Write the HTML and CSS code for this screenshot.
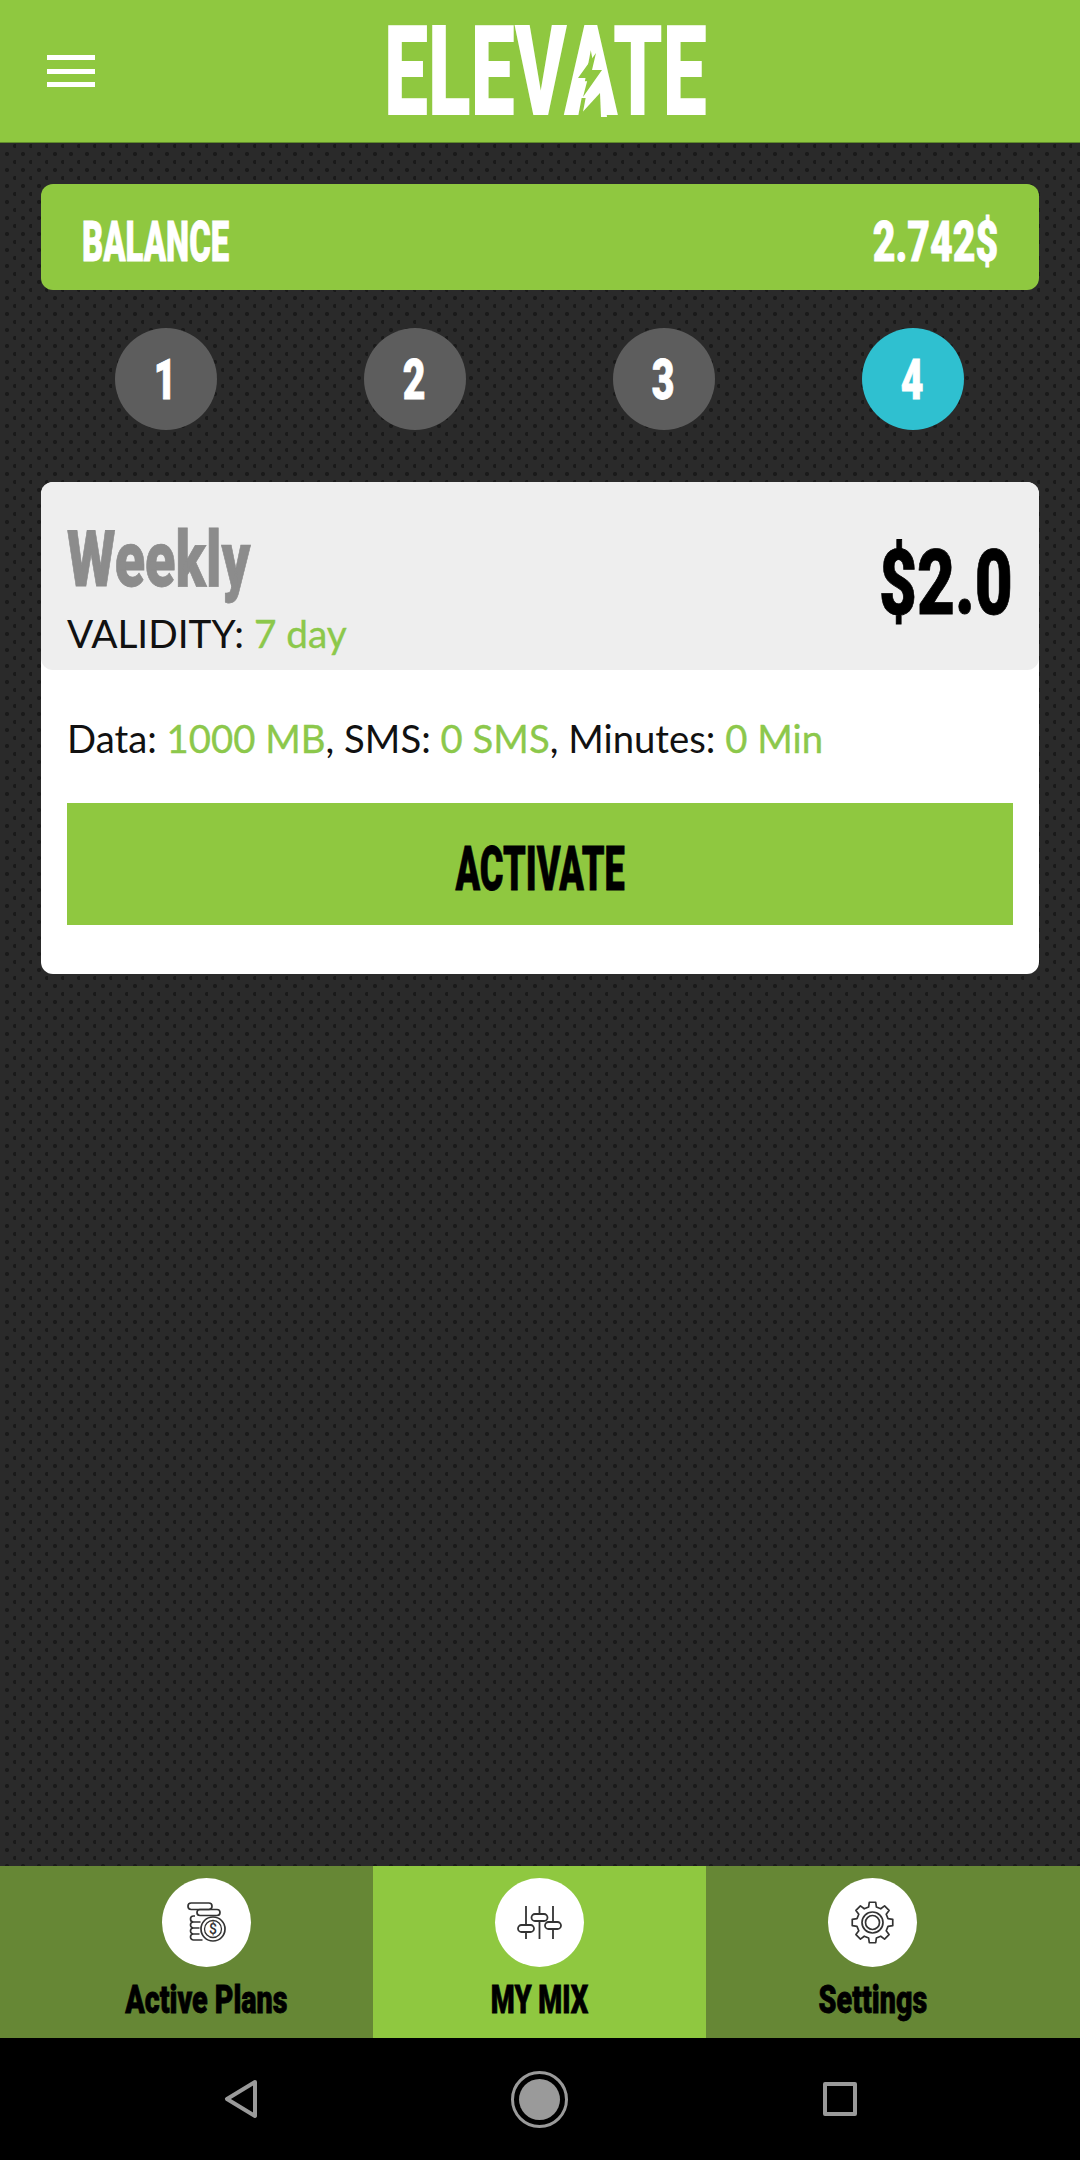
FILE: index.html
```html
<!DOCTYPE html>
<html lang="en">
<head>
<meta charset="utf-8">
<title>Elevate</title>
<link rel="stylesheet" href="styles.css">
</head>
<body>
<div class="page">
  <header class="topbar">
    <div class="burger"><i></i><i></i><i></i></div>
    <div class="logo">
      <span class="logo-text">ELEVATE</span>
      <svg class="logo-bolt" viewBox="0 0 60 70" width="60" height="70">
        <polygon points="30,-4 17,64 42,64 34,-4" fill="#fff"/>
        <polygon points="31,0 13,25 23,25 18,44 37,17 27,17" fill="#8fc840"/>
        <polygon points="13,64 35,40 36,64" fill="#8fc840"/>
      </svg>
    </div>
  </header>
  <main class="content">
    <section class="balance">
      <span class="cond balance-label">BALANCE</span>
      <span class="cond balance-value">2.742$</span>
    </section>
    <section class="steps">
      <div class="step"><span class="cond step-num">1</span></div>
      <div class="step"><span class="cond step-num">2</span></div>
      <div class="step"><span class="cond step-num">3</span></div>
      <div class="step step-active"><span class="cond step-num">4</span></div>
    </section>
    <section class="card">
      <div class="card-head">
        <div class="card-title">
          <span class="cond weekly">Weekly</span>
          <div class="validity">VALIDITY: <em>7 day</em></div>
        </div>
        <span class="cond price">$2.0</span>
      </div>
      <div class="card-body">
        <p class="allow">Data: <em>1000 MB</em>, SMS: <em>0 SMS</em>, Minutes: <em>0 Min</em></p>
        <div class="activate"><span class="cond activate-text">ACTIVATE</span></div>
      </div>
    </section>
  </main>
  <nav class="tabs">
    <div class="tab">
      <div class="tab-icon">
        <svg viewBox="0 0 89 89" width="89" height="89" fill="none" stroke="#333" stroke-width="1.7">
          <rect x="26" y="25" width="24" height="6.5" rx="3.2"/>
          <rect x="35" y="31.5" width="23" height="6" rx="3"/>
          <path d="M33 38h-1.500a2.500 2.500 0 0 0 0 6a2.500 2.500 0 0 0 0 6a2.500 2.500 0 0 0 0 6a2.500 2.500 0 0 0 0 6h9M31.500 44h7M31.500 50h6M31.500 56h6"/>
          <circle cx="51" cy="51" r="12"/>
          <circle cx="51" cy="51" r="8.500" stroke-width="1.300"/>
          <text x="51" y="56" class="coin-text">$</text>
        </svg>
      </div>
      <span class="cond tab-label tab-plans">Active Plans</span>
    </div>
    <div class="tab tab-active">
      <div class="tab-icon">
        <svg viewBox="0 0 89 89" width="89" height="89" fill="none" stroke="#333" stroke-width="1.8">
          <path d="M31 28v33M44.500 28v33M58 28v33"/>
          <rect x="23" y="47" width="16" height="7" rx="3.500" fill="#fff"/>
          <rect x="36.500" y="36" width="16" height="7" rx="3.500" fill="#fff"/>
          <rect x="50" y="44" width="16" height="7" rx="3.500" fill="#fff"/>
        </svg>
      </div>
      <span class="cond tab-label tab-mix">MY MIX</span>
    </div>
    <div class="tab">
      <div class="tab-icon">
        <svg viewBox="-44.500 -44.500 89 89" width="89" height="89" fill="none" stroke="#333" stroke-width="1.7" stroke-linejoin="round">
          <path d="M-3.870 -15.520L-3.200 -20.250L3.200 -20.250L3.870 -15.520L8.240 -13.710L12.060 -16.580L16.580 -12.060L13.710 -8.240L15.520 -3.870L20.250 -3.200L20.250 3.200L15.520 3.870L13.710 8.240L16.580 12.060L12.060 16.580L8.240 13.710L3.870 15.520L3.200 20.250L-3.200 20.250L-3.870 15.520L-8.240 13.710L-12.060 16.580L-16.580 12.060L-13.710 8.240L-15.520 3.870L-20.250 3.200L-20.250 -3.200L-15.520 -3.870L-13.710 -8.240L-16.580 -12.060L-12.060 -16.580L-8.240 -13.710Z"/>
          <circle r="10.500"/>
          <circle r="7"/>
        </svg>
      </div>
      <span class="cond tab-label tab-settings">Settings</span>
    </div>
  </nav>
  <div class="sysbar">
    <svg class="sys-back" viewBox="0 0 34 40" width="34" height="40"><polygon points="31,3 3,20 31,37" fill="none" stroke="#9a9a9a" stroke-width="4" stroke-linejoin="round"/></svg>
    <div class="sys-home"><i></i></div>
    <div class="sys-square"></div>
  </div>
</div>
</body>
</html>
```

FILE: styles.css
```css
* { box-sizing: border-box; }
html, body { margin: 0; padding: 0; }
body { font-family: "Lato", "Noto Sans", sans-serif; background: #2a2a2a; }
em { font-style: normal; color: #8cc84b; -webkit-text-stroke: 0.35px currentColor; }

.page { width: 1080px; height: 2160px; display: flex; flex-direction: column; overflow: hidden; }

.cond {
  display: inline-block;
  font-family: "Roboto", "Liberation Sans", sans-serif;
  font-weight: 900;
  white-space: nowrap;
  -webkit-text-stroke: 0.8px currentColor;
}

/* top bar */
.topbar {
  height: 143px;
  flex: none;
  background: #8fc840;
  display: flex;
  align-items: center;
  justify-content: center;
  position: relative;
  border-bottom: 1px solid #5f8a2b;
}
.burger {
  position: absolute;
  left: 47px;
  top: 55px;
  width: 48px;
  height: 32px;
  display: flex;
  flex-direction: column;
  justify-content: space-between;
}
.burger i { display: block; height: 5px; background: #fff; }
.logo { position: relative; width: 318px; height: 90px; margin-top: 1px; margin-left: 6px; }
.logo-text {
  position: absolute;
  left: 0;
  top: -23px;
  font-family: "Roboto", sans-serif;
  font-weight: 900;
  font-size: 127px;
  line-height: 136px;
  color: #fff;
  transform-origin: left center;
  transform: scaleX(0.62);
  white-space: nowrap;
}
.logo-bolt { position: absolute; left: 181px; top: 26px; overflow: visible; }

/* content */
.content {
  flex: 1;
  padding: 41px 41px 0;
  background-color: #2a2a2a;
  background-image:
    radial-gradient(circle at 15px 3px, #1a1a1a 1.8px, transparent 2.4px),
    radial-gradient(circle at 7px 11px, #1a1a1a 1.8px, transparent 2.4px);
  background-size: 16px 16px;
  background-position: 0 0;
}
.balance {
  height: 106px;
  background: #8fc840;
  border-radius: 12px;
  display: flex;
  align-items: center;
  justify-content: space-between;
  padding: 9px 41px 0;
  color: #fff;
}
.balance-label { font-size: 56px; line-height: 60px; transform-origin: left center; transform: scaleX(0.587); }
.balance-value { font-size: 56px; line-height: 60px; transform-origin: right center; transform: scaleX(0.7); }

.steps { display: grid; grid-template-columns: repeat(4, 1fr); margin-top: 38px; padding-right: 2px; }
.step {
  width: 102px;
  height: 102px;
  border-radius: 50%;
  background: #5d5d5d;
  justify-self: center;
  display: flex;
  align-items: center;
  justify-content: center;
  padding-top: 2px;
  color: #fff;
}
.step-active { background: #2fc0d0; }
.step-num { font-size: 56px; line-height: 60px; transform: scaleX(0.7); }

.card { margin-top: 52px; height: 492px; background: #fff; border-radius: 12px; }
.card-head {
  height: 188px;
  background: #eeeeee;
  border-radius: 12px;
  padding: 0 26px;
  display: flex;
  align-items: center;
  justify-content: space-between;
}
.card-title { display: flex; flex-direction: column; align-items: flex-start; margin-top: 24px; }
.weekly { font-size: 77px; line-height: 80px; color: #8c8c8c; transform-origin: left center; transform: scaleX(0.725); }
.validity { font-size: 38.8px; line-height: 46px; color: #111; margin-top: 10px; }
.price { font-size: 91px; line-height: 100px; color: #000; margin-top: 14px; transform-origin: right center; transform: scaleX(0.72); }

.card-body { padding: 0 26px; }
.allow { margin: 45px 0 0; font-size: 38.3px; line-height: 46px; color: #111; white-space: nowrap; }
.activate {
  margin-top: 42px;
  height: 122px;
  background: #8fc840;
  display: flex;
  align-items: center;
  justify-content: center;
  padding-top: 10px;
  color: #000;
}
.activate-text { font-size: 62px; line-height: 66px; transform: scaleX(0.583); }

/* bottom tabs */
.tabs {
  flex: none;
  height: 172px;
  background: #668735;
  padding: 0 41px 0 40px;
  display: grid;
  grid-template-columns: repeat(3, 1fr);
}
.tab { display: flex; flex-direction: column; align-items: center; padding-top: 12px; }
.tab-active { background: #8fc840; }
.tab-icon { width: 89px; height: 89px; border-radius: 50%; background: #fff; }
.tab-icon svg { display: block; }
.coin-text { font-family: "Roboto", sans-serif; font-size: 14px; font-weight: 500; fill: #333; stroke: none; text-anchor: middle; }
.tab-label { font-size: 39px; line-height: 44px; margin-top: 11px; color: #000; }
.tab-plans { transform: scaleX(0.735); }
.tab-mix { transform: scaleX(0.7); }
.tab-settings { transform: scaleX(0.735); }

/* system bar */
.sysbar {
  flex: none;
  height: 122px;
  background: #000;
  display: grid;
  grid-template-columns: 224px 34px 253px 57px 255px 34px;
  align-items: center;
}
.sys-back { grid-column: 2; }
.sys-home {
  grid-column: 4;
  width: 57px;
  height: 57px;
  border: 3px solid #9a9a9a;
  border-radius: 50%;
  display: flex;
  align-items: center;
  justify-content: center;
}
.sys-home i { display: block; width: 41px; height: 41px; border-radius: 50%; background: #9a9a9a; }
.sys-square { grid-column: 6; width: 34px; height: 34px; border: 4px solid #9a9a9a; border-radius: 2px; }
```
